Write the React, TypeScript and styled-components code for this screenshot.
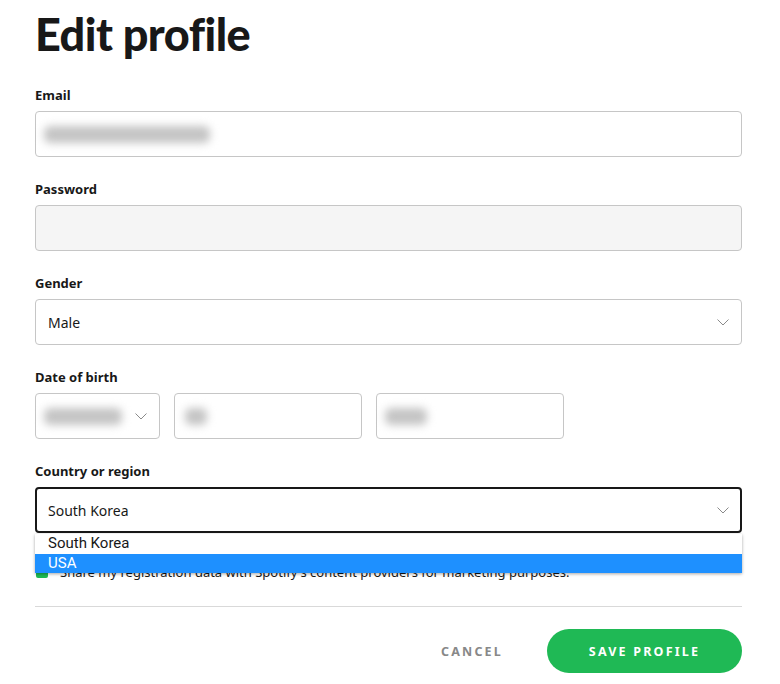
import styled, {createGlobalStyle} from "styled-components";

const GlobalStyle = createGlobalStyle`
  body {
    margin: 0;
    background: #ffffff;
    font-family: "Noto Sans", "Liberation Sans", sans-serif;
    color: #181818;
  }
`;

const Page = styled.main`
  width: 707px;
  padding: 8px 0 0 35px;
`;

const Title = styled.h1`
  margin: 0 0 27px;
  font-family: "Lato", "Noto Sans", sans-serif;
  font-weight: 900;
  font-size: 45px;
  line-height: 52px;
  letter-spacing: -0.5px;
  color: #181818;
`;

const Field = styled.div`
  display: flex;
  flex-direction: column;
  gap: 8px;
  margin-bottom: 24px;
  position: relative;
`;

const Label = styled.label`
  font-size: 13px;
  line-height: 16px;
  font-weight: 700;
  color: #181818;
`;

const Box = styled.div<{$disabled?: boolean; $focused?: boolean; $width?: number}>`
  box-sizing: border-box;
  height: 46px;
  width: ${({$width}) => ($width ? `${$width}px` : "100%")};
  display: flex;
  align-items: center;
  justify-content: space-between;
  padding: 0 ${({$focused}) => ($focused ? "11px" : "12px")};
  border: ${({$focused}) => ($focused ? "2px solid #181818" : "1px solid #c6c6c6")};
  border-radius: 4px;
  background: ${({$disabled}) => ($disabled ? "#f5f5f5" : "#ffffff")};
  font-size: 14px;
  color: #181818;
`;

const Blurred = styled.span<{$width: number}>`
  display: block;
  width: ${({$width}) => $width}px;
  height: 17px;
  margin-left: ${({$width}) => ($width > 30 ? -4 : -2)}px;
  border-radius: 6px;
  background: #c4c4c4;
  filter: blur(4px);
`;

const DateRow = styled.div`
  display: flex;
  gap: 14px;
`;

const Chevron = () => (
  <svg width="12" height="7" viewBox="0 0 12 7" fill="none">
    <path d="M0.5 0.5L6 6L11.5 0.5" stroke="#8a8a8a" strokeWidth="1" />
  </svg>
);

const OptionList = styled.ul`
  position: absolute;
  top: 100%;
  left: 0;
  right: 0;
  margin: 1px 0 0;
  padding: 0;
  list-style: none;
  background: #ffffff;
  box-shadow: 0 1px 3px rgba(0, 0, 0, 0.35);
  z-index: 2;
`;

const Option = styled.li<{$selected?: boolean}>`
  height: 19.5px;
  line-height: 19.5px;
  padding: 0 13px;
  font-family: "Roboto", "Liberation Sans", sans-serif;
  font-size: 15px;
  color: ${({$selected}) => ($selected ? "#ffffff" : "#181818")};
  background: ${({$selected}) => ($selected ? "#1e90ff" : "#ffffff")};
`;

const ConsentRow = styled.div`
  display: flex;
  align-items: center;
  gap: 12px;
  margin-top: 29px;
  height: 20px;
  font-size: 13px;
  color: #181818;
`;

const CheckBox = styled.span`
  width: 12px;
  height: 12px;
  border-radius: 2px;
  background: #1db954;
  flex-shrink: 0;
  margin-left: 1px;
`;

const Divider = styled.hr`
  margin: 24px 0 22px;
  border: none;
  border-top: 1px solid #d9d9d9;
`;

const Actions = styled.div`
  display: flex;
  justify-content: flex-end;
  align-items: center;
  gap: 38px;
`;

const TextButton = styled.button`
  border: none;
  background: none;
  padding: 0 6px;
  font-family: "Noto Sans", sans-serif;
  font-size: 12.5px;
  font-weight: 700;
  letter-spacing: 2.2px;
  color: #888888;
`;

const PrimaryButton = styled.button`
  height: 44px;
  width: 195px;
  border: none;
  border-radius: 22px;
  background: #1fb955;
  color: #ffffff;
  font-family: "Noto Sans", sans-serif;
  font-size: 12.5px;
  font-weight: 700;
  letter-spacing: 2.2px;
`;

const App = () => (
  <Page>
    <GlobalStyle />
    <Title>Edit profile</Title>

    <Field>
      <Label>Email</Label>
      <Box>
        <Blurred $width={166} />
      </Box>
    </Field>

    <Field>
      <Label>Password</Label>
      <Box $disabled />
    </Field>

    <Field>
      <Label>Gender</Label>
      <Box>
        <span>Male</span>
        <Chevron />
      </Box>
    </Field>

    <Field>
      <Label>Date of birth</Label>
      <DateRow>
        <Box $width={125}>
          <Blurred $width={78} />
          <Chevron />
        </Box>
        <Box $width={188}>
          <Blurred $width={22} />
        </Box>
        <Box $width={188}>
          <Blurred $width={42} />
        </Box>
      </DateRow>
    </Field>

    <Field>
      <Label>Country or region</Label>
      <Box $focused>
        <span>South Korea</span>
        <Chevron />
      </Box>
      <OptionList>
        <Option>South Korea</Option>
        <Option $selected>USA</Option>
      </OptionList>
    </Field>

    <ConsentRow>
      <CheckBox />
      <span>
        Share my registration data with Spotify's content providers for marketing purposes.
      </span>
    </ConsentRow>

    <Divider />

    <Actions>
      <TextButton>CANCEL</TextButton>
      <PrimaryButton>SAVE PROFILE</PrimaryButton>
    </Actions>
  </Page>
);

export default App;
